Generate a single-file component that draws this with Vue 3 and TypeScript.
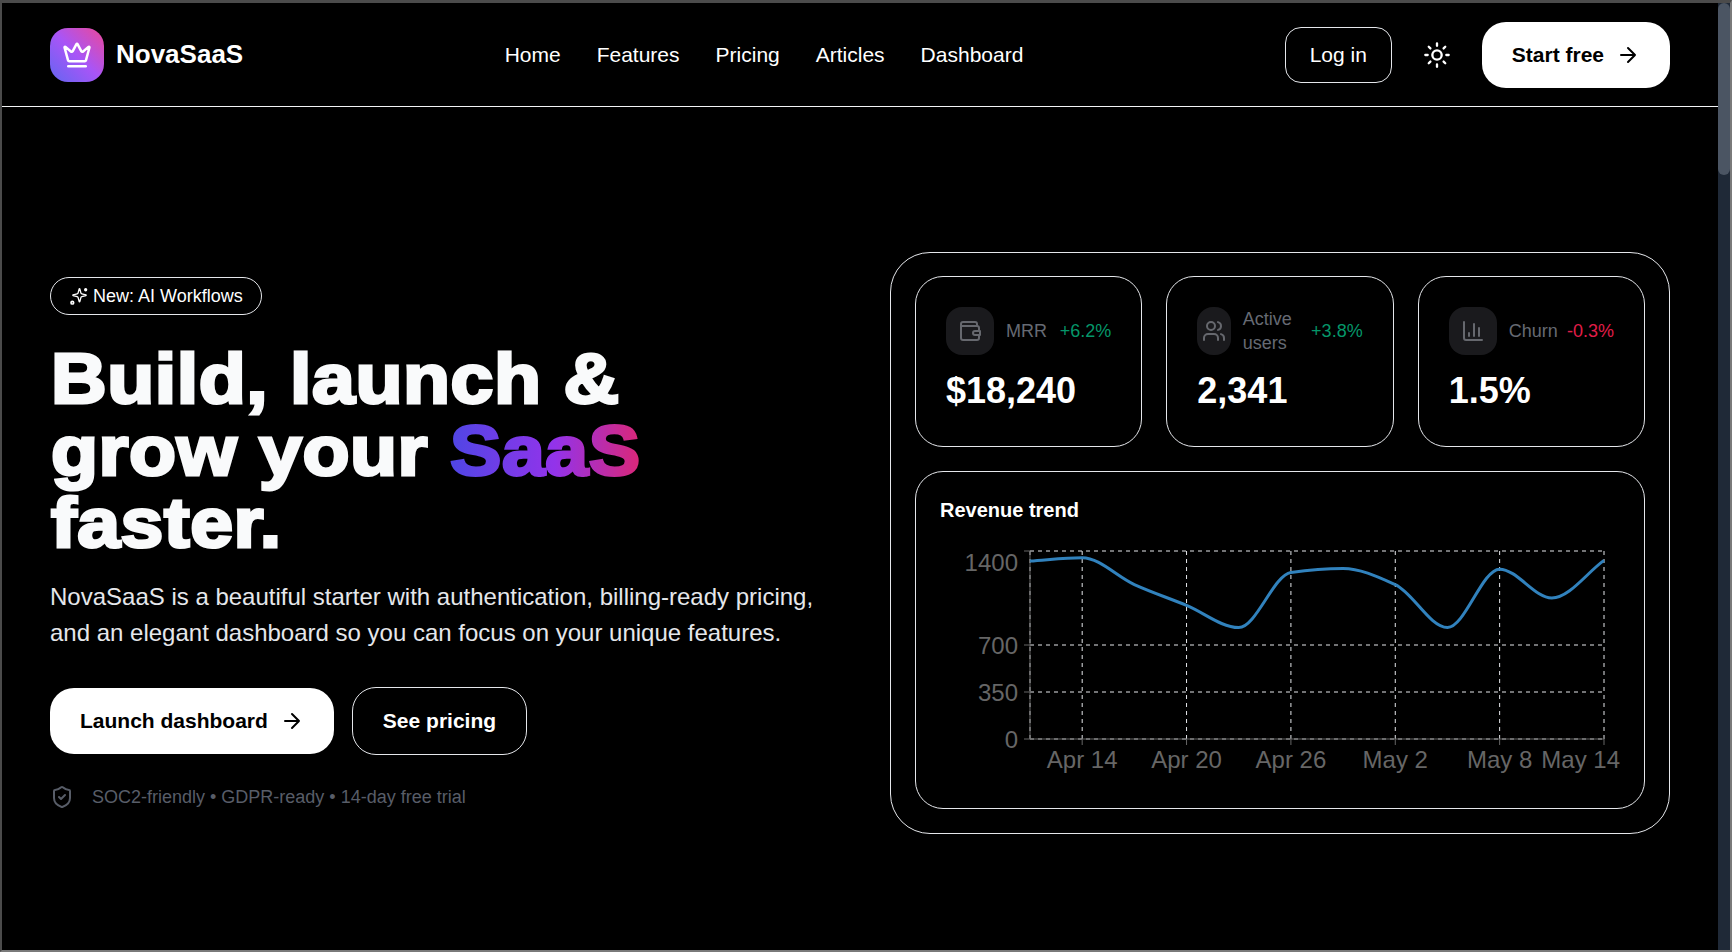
<script setup lang="ts">
const navLinks = ['Home', 'Features', 'Pricing', 'Articles', 'Dashboard']

const values = [1325, 1350, 1150, 995, 830, 1240, 1270, 1150, 830, 1265, 1050, 1330]

// chart geometry, in svg px
const plotLeft = 90
const plotRight = 664
const plotTop = 15
const plotBottom = 203
const stepX = (plotRight - plotLeft) / (values.length - 1)
const toY = (v: number) => plotBottom - (v / 1400) * (plotBottom - plotTop)

const points = values.map((v, i) => ({ x: plotLeft + i * stepX, y: toY(v) }))

// same curve as d3 monotoneX
function monotonePath(pts: { x: number; y: number }[]) {
  const n = pts.length
  const slopes: number[] = []
  for (let i = 0; i < n - 1; i++) {
    slopes.push((pts[i + 1].y - pts[i].y) / (pts[i + 1].x - pts[i].x))
  }
  const tangents: number[] = [slopes[0]]
  for (let i = 1; i < n - 1; i++) {
    const a = slopes[i - 1]
    const b = slopes[i]
    tangents.push(a * b <= 0 ? 0 : (2 * a * b) / (a + b))
  }
  tangents.push(slopes[n - 2])
  let d = `M${pts[0].x},${pts[0].y}`
  for (let i = 0; i < n - 1; i++) {
    const dx = (pts[i + 1].x - pts[i].x) / 3
    d += `C${pts[i].x + dx},${pts[i].y + dx * tangents[i]} ${pts[i + 1].x - dx},${pts[i + 1].y - dx * tangents[i + 1]} ${pts[i + 1].x},${pts[i + 1].y}`
  }
  return d
}

const linePath = monotonePath(points)

const yTicks = [
  { label: '0', v: 0, dy: 9 },
  { label: '350', v: 350, dy: 9 },
  { label: '700', v: 700, dy: 9 },
  { label: '1400', v: 1400, dy: 20 }
].map((t) => ({ ...t, y: toY(t.v) }))

const xTicks = [
  { label: 'Apr 14', i: 1 },
  { label: 'Apr 20', i: 3 },
  { label: 'Apr 26', i: 5 },
  { label: 'May 2', i: 7 },
  { label: 'May 8', i: 9 }
].map((t) => ({ ...t, x: plotLeft + t.i * stepX }))
</script>

<template>
  <div class="window">
    <div class="page">
      <header class="header">
        <div class="brand">
          <span class="logo">
            <svg width="30" height="30" viewBox="0 0 24 24" fill="none" stroke="#fff" stroke-width="2" stroke-linecap="round" stroke-linejoin="round">
              <path d="M11.562 3.266a.5.5 0 0 1 .876 0L15.39 8.87a1 1 0 0 0 1.516.294L21.183 5.5a.5.5 0 0 1 .798.519l-2.834 10.246a1 1 0 0 1-.956.734H5.81a1 1 0 0 1-.957-.734L2.02 6.02a.5.5 0 0 1 .798-.519l4.276 3.664a1 1 0 0 0 1.516-.294z" />
              <path d="M5 21h14" />
            </svg>
          </span>
          <span class="brand-name">NovaSaaS</span>
        </div>
        <nav class="nav">
          <a v-for="link in navLinks" :key="link" class="nav-link">{{ link }}</a>
        </nav>
        <div class="actions">
          <button class="btn-login">Log in</button>
          <svg width="28" height="28" viewBox="0 0 24 24" fill="none" stroke="#fff" stroke-width="2" stroke-linecap="round" stroke-linejoin="round">
            <circle cx="12" cy="12" r="4" />
            <path d="M12 2v2M12 20v2m-7.07-17.07 1.41 1.41m11.32 11.32 1.41 1.41M2 12h2M20 12h2M6.34 17.66l-1.41 1.41M19.07 4.93l-1.41 1.41" />
          </svg>
          <button class="btn-solid">
            Start free
            <svg width="24" height="24" viewBox="0 0 24 24" fill="none" stroke="currentColor" stroke-width="2" stroke-linecap="round" stroke-linejoin="round"><path d="M5 12h14M12 5l7 7-7 7" /></svg>
          </button>
        </div>
      </header>

      <main class="hero">
        <section class="intro">
          <div class="badge">
            <svg width="20" height="20" viewBox="0 0 24 24" fill="none" stroke="currentColor" stroke-width="2" stroke-linecap="round" stroke-linejoin="round">
              <path d="M9.937 15.5A2 2 0 0 0 8.5 14.063l-6.135-1.582a.5.5 0 0 1 0-.962L8.5 9.936A2 2 0 0 0 9.937 8.5l1.582-6.135a.5.5 0 0 1 .963 0L14.063 8.5A2 2 0 0 0 15.5 9.937l6.135 1.581a.5.5 0 0 1 0 .964L15.5 14.063a2 2 0 0 0-1.437 1.437l-1.582 6.135a.5.5 0 0 1-.963 0z" transform="translate(3 1.5) scale(.8)" />
              <circle cx="20" cy="4.5" r="1" fill="currentColor" />
              <circle cx="4" cy="20" r="1.6" />
            </svg>
            New: AI Workflows
          </div>
          <h1 class="title">Build, launch &amp;<br />grow your <span class="accent">SaaS</span><br />faster.</h1>
          <p class="lead">NovaSaaS is a beautiful starter with authentication, billing-ready pricing, and an elegant dashboard so you can focus on your unique features.</p>
          <div class="cta">
            <button class="btn-solid btn-lg">
              Launch dashboard
              <svg width="24" height="24" viewBox="0 0 24 24" fill="none" stroke="currentColor" stroke-width="2" stroke-linecap="round" stroke-linejoin="round"><path d="M5 12h14M12 5l7 7-7 7" /></svg>
            </button>
            <button class="btn-outline">See pricing</button>
          </div>
          <div class="trust">
            <svg width="24" height="24" viewBox="0 0 24 24" fill="none" stroke="currentColor" stroke-width="2" stroke-linecap="round" stroke-linejoin="round">
              <path d="M20 13c0 5-3.5 7.5-7.66 8.95a1 1 0 0 1-.67-.01C7.5 20.5 4 18 4 13V6a1 1 0 0 1 1-1c2 0 4.5-1.2 6.24-2.72a1.17 1.17 0 0 1 1.52 0C14.51 3.81 17 5 19 5a1 1 0 0 1 1 1z" />
              <path d="m9 12 2 2 4-4" />
            </svg>
            <span>SOC2-friendly • GDPR-ready • 14-day free trial</span>
          </div>
        </section>

        <section class="panel">
          <div class="stats">
            <div class="stat">
              <div class="stat-head">
                <div class="stat-group">
                  <span class="stat-icon">
                    <svg width="24" height="24" viewBox="0 0 24 24" fill="none" stroke="currentColor" stroke-width="2" stroke-linecap="round" stroke-linejoin="round">
                      <path d="M19 7V5a2 2 0 0 0-2-2H5a2 2 0 0 0-2 2v14a2 2 0 0 0 2 2h14a2 2 0 0 0 2-2v-3" />
                      <path d="M3 7h16a2 2 0 0 1 2 2v3" />
                      <path d="M22 12h-5a2 2 0 0 0 0 4h5z" />
                    </svg>
                  </span>
                  <span class="stat-label">MRR</span>
                </div>
                <span class="up">+6.2%</span>
              </div>
              <div class="stat-value">$18,240</div>
            </div>
            <div class="stat">
              <div class="stat-head">
                <div class="stat-group">
                  <span class="stat-icon">
                    <svg width="24" height="24" viewBox="0 0 24 24" fill="none" stroke="currentColor" stroke-width="2" stroke-linecap="round" stroke-linejoin="round">
                      <path d="M16 21v-2a4 4 0 0 0-4-4H6a4 4 0 0 0-4 4v2" />
                      <circle cx="9" cy="7" r="4" />
                      <path d="M22 21v-2a4 4 0 0 0-3-3.87M16 3.13a4 4 0 0 1 0 7.75" />
                    </svg>
                  </span>
                  <span class="stat-label">Active users</span>
                </div>
                <span class="up">+3.8%</span>
              </div>
              <div class="stat-value">2,341</div>
            </div>
            <div class="stat">
              <div class="stat-head">
                <div class="stat-group">
                  <span class="stat-icon">
                    <svg width="24" height="24" viewBox="0 0 24 24" fill="none" stroke="currentColor" stroke-width="2" stroke-linecap="round" stroke-linejoin="round">
                      <path d="M3 3v16a2 2 0 0 0 2 2h16M18 17V9M13 17V5M8 17v-3" />
                    </svg>
                  </span>
                  <span class="stat-label">Churn</span>
                </div>
                <span class="down">-0.3%</span>
              </div>
              <div class="stat-value">1.5%</div>
            </div>
          </div>

          <div class="chart-card">
            <div class="chart-title">Revenue trend</div>
            <svg class="chart" width="680" height="248" viewBox="0 0 680 248">
              <g class="grid">
                <line v-for="t in yTicks" :key="t.label" :x1="plotLeft" :x2="plotRight" :y1="t.y" :y2="t.y" />
                <line v-for="t in xTicks" :key="t.label" :x1="t.x" :x2="t.x" :y1="plotTop" :y2="plotBottom" />
                <line :x1="plotLeft" :x2="plotLeft" :y1="plotTop" :y2="plotBottom" />
                <line :x1="plotRight" :x2="plotRight" :y1="plotTop" :y2="plotBottom" />
              </g>
              <g class="axis">
                <line :x1="plotLeft" :x2="plotRight" :y1="plotBottom" :y2="plotBottom" />
                <line :x1="plotLeft" :x2="plotLeft" :y1="plotTop" :y2="plotBottom" />
                <line v-for="t in yTicks" :key="t.label" :x1="plotLeft - 6" :x2="plotLeft" :y1="t.y" :y2="t.y" />
                <line v-for="t in xTicks" :key="t.label" :x1="t.x" :x2="t.x" :y1="plotBottom" :y2="plotBottom + 6" />
                <line :x1="plotRight" :x2="plotRight" :y1="plotBottom" :y2="plotBottom + 6" />
              </g>
              <text v-for="t in yTicks" :key="t.label" class="tick" :x="plotLeft - 12" :y="t.y + t.dy" text-anchor="end">{{ t.label }}</text>
              <text v-for="t in xTicks" :key="t.label" class="tick" :x="t.x" :y="plotBottom + 29" text-anchor="middle">{{ t.label }}</text>
              <text class="tick" x="680" :y="plotBottom + 29" text-anchor="end">May 14</text>
              <path class="line" :d="linePath" />
            </svg>
          </div>
        </section>
      </main>
    </div>
    <div class="scrollbar"><div class="scroll-thumb"></div></div>
  </div>
</template>

<style>
html,
body {
  margin: 0;
  background: #000;
}
</style>

<style scoped>
.window {
  height: 952px;
  box-sizing: border-box;
  border: 2px solid #7a7a7a;
  border-top: 3px solid #4b4b4b;
  border-left-color: #4b4b4b;
  background: #000;
  color: #fff;
  display: flex;
  overflow: hidden;
  font-family: "Liberation Sans", Arial, sans-serif;
}

.page {
  flex: 1;
  min-width: 0;
}

.scrollbar {
  width: 12px;
  background: #1f2937;
}

.scroll-thumb {
  height: 172px;
  background: #4b5563;
  border-radius: 6px;
}

.header {
  height: 104px;
  box-sizing: border-box;
  border-bottom: 1px solid #f3f4f6;
  padding: 0 48px;
  display: flex;
  align-items: center;
  justify-content: space-between;
}

.brand {
  display: flex;
  align-items: center;
  gap: 12px;
}

.logo {
  width: 54px;
  height: 54px;
  border-radius: 18px;
  background: linear-gradient(45deg, #6366f1, #a855f7 50%, #ec4899);
  display: flex;
  align-items: center;
  justify-content: center;
}

.brand-name {
  font-size: 26px;
  font-weight: 700;
}

.nav {
  display: flex;
  gap: 36px;
}

.nav-link {
  font-size: 21px;
}

.actions {
  display: flex;
  align-items: center;
  gap: 31px;
}

button {
  font-family: inherit;
  cursor: pointer;
}

.btn-login {
  width: 107px;
  height: 56px;
  background: transparent;
  border: 1px solid #e5e7eb;
  border-radius: 16px;
  color: #fff;
  font-size: 21px;
}

.btn-solid {
  height: 66px;
  padding: 0 30px;
  border: none;
  border-radius: 24px;
  background: #fff;
  color: #000;
  font-size: 21px;
  font-weight: 700;
  display: flex;
  align-items: center;
  gap: 12px;
}

.hero {
  display: flex;
  justify-content: space-between;
  align-items: center;
  padding: 145px 48px 0;
}

.intro {
  width: 780px;
}

.badge {
  display: inline-flex;
  align-items: center;
  gap: 4px;
  height: 38px;
  box-sizing: border-box;
  padding: 0 18px;
  border: 1px solid #e5e7eb;
  border-radius: 19px;
  font-size: 18px;
}

/* Arial Black stand-in: bold widened and thickened */
.title {
  margin: 28px 0 0 1px;
  font-size: 70px;
  line-height: 72px;
  font-weight: 700;
  letter-spacing: 0.5px;
  color: #f9fafb;
  -webkit-text-stroke: 3px #f9fafb;
  transform: scaleX(1.1);
  transform-origin: left center;
}

.accent {
  background: linear-gradient(90deg, #4f46e5, #9333ea 55%, #db2777);
  -webkit-background-clip: text;
  background-clip: text;
  color: transparent;
  -webkit-text-stroke: 3px transparent;
}

.lead {
  margin: 20px 0 0;
  font-size: 24px;
  line-height: 36px;
  color: #e5e7eb;
}

.cta {
  display: flex;
  align-items: center;
  gap: 18px;
  margin-top: 36px;
}

.btn-outline {
  height: 68px;
  padding: 0 30px;
  background: transparent;
  border: 1px solid #e5e7eb;
  border-radius: 24px;
  color: #fff;
  font-size: 21px;
  font-weight: 700;
}

.trust {
  display: flex;
  align-items: center;
  gap: 18px;
  margin-top: 30px;
  font-size: 18px;
  color: #585d68;
}

.panel {
  width: 780px;
  box-sizing: border-box;
  padding: 23px 24px 24px;
  border: 1px solid #e5e7eb;
  border-radius: 40px;
}

.stats {
  display: grid;
  grid-template-columns: repeat(3, minmax(0, 1fr));
  gap: 24px;
}

.stat {
  height: 171px;
  box-sizing: border-box;
  padding: 30px;
  border: 1px solid #e5e7eb;
  border-radius: 28px;
}

.stat-head {
  display: flex;
  align-items: center;
  justify-content: space-between;
  font-size: 18px;
  line-height: 24px;
}

.stat-group {
  display: flex;
  align-items: center;
  gap: 12px;
  min-width: 0;
}

.stat-icon {
  width: 48px;
  height: 48px;
  border-radius: 16px;
  background: #1a1a1d;
  color: #66686e;
  display: flex;
  align-items: center;
  justify-content: center;
}

.stat-label {
  color: #666a73;
}

.up {
  color: #059669;
}

.down {
  color: #e11d48;
}

.stat-value {
  margin-top: 16px;
  font-size: 36px;
  line-height: 40px;
  font-weight: 700;
}

.chart-card {
  margin-top: 24px;
  height: 338px;
  box-sizing: border-box;
  padding: 24px;
  border: 1px solid #e5e7eb;
  border-radius: 28px;
}

.chart-title {
  font-size: 20px;
  line-height: 28px;
  font-weight: 700;
  margin-bottom: 12px;
}

.chart {
  display: block;
}

.grid line {
  stroke: #e5e7eb;
  stroke-dasharray: 4 4;
}

.axis line {
  stroke: #666;
}

.tick {
  fill: #666;
  font-size: 24px;
}

.line {
  fill: none;
  stroke: #3182bd;
  stroke-width: 3;
}
</style>
